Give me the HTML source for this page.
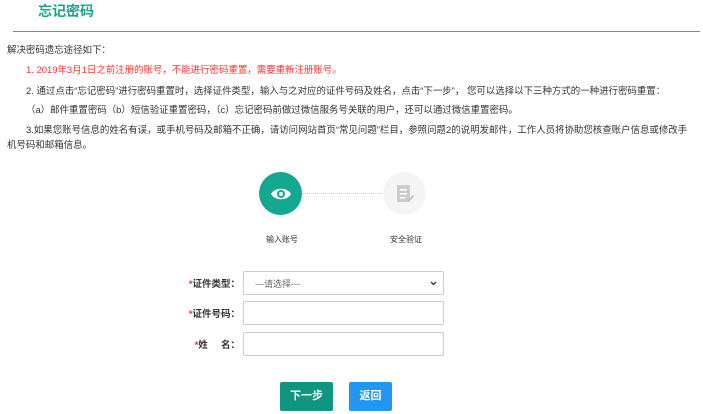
<!DOCTYPE html>
<html><head><meta charset="utf-8"><style>
body{margin:0;width:703px;height:414px;background:#fff;font-family:"Liberation Sans","Noto Sans CJK SC",sans-serif;position:relative;overflow:hidden;color:#333}
.a{position:absolute;white-space:nowrap}
.t{font-size:9.45px;line-height:12px}
.lab{position:absolute;font-size:9.5px;font-weight:bold;color:#333;text-align:right;width:80px;left:160px}
.lab b{color:#e33}
.box{position:absolute;left:243px;width:199px;height:22px;border:1px solid #ccc;border-radius:2px;background:#fff}
</style></head><body>
<div class="a" style="left:38px;top:1px;font-size:14px;font-weight:bold;color:#1aa58a">忘记密码</div>
<div class="a" style="left:13px;top:31px;width:687px;height:1px;background:#888"></div>
<div class="a t" style="left:7px;top:45px">解决密码遗忘途径如下：</div>
<div class="a t" style="left:26px;top:65px;color:#f33">1. 2019年3月1日之前注册的账号，不能进行密码重置，需要重新注册账号。</div>
<div class="a t" style="left:26px;top:86px">2. 通过点击“忘记密码”进行密码重置时，选择证件类型，输入与之对应的证件号码及姓名，点击“下一步”， 您可以选择以下三种方式的一种进行密码重置：</div>
<div class="a t" style="left:26px;top:105px">（a）邮件重置密码（b）短信验证重置密码，（c）忘记密码前做过微信服务号关联的用户，还可以通过微信重置密码。</div>
<div class="a t" style="left:26px;top:125px">3.如果您账号信息的姓名有误，或手机号码及邮箱不正确，请访问网站首页“常见问题”栏目，参照问题2的说明发邮件，工作人员将协助您核查账户信息或修改手</div>
<div class="a t" style="left:7px;top:140px">机号码和邮箱信息。</div>
<div class="a" style="left:302px;top:193px;width:80px;border-top:1px dotted #ccc"></div>
<div class="a" style="left:259px;top:172px;width:43px;height:43px;border-radius:50%;background:#14a88e"></div>
<svg class="a" style="left:270px;top:186px" width="22" height="16" viewBox="0 0 22 16"><path d="M1 8C5 1 17 1 21 8C17 15 5 15 1 8Z" fill="#fff"/><circle cx="11" cy="8" r="4" fill="#14a88e"/><circle cx="11" cy="8" r="2" fill="#fff"/></svg>
<div class="a" style="left:383px;top:172px;width:43px;height:43px;border-radius:50%;background:#f5f5f7"></div>
<svg class="a" style="left:396px;top:184px" width="18" height="20" viewBox="0 0 18 20"><rect x="1" y="1" width="13" height="17" rx="1" fill="#ccc"/><rect x="4" y="5" width="7" height="1.5" fill="#fff"/><rect x="4" y="9" width="7" height="1.5" fill="#fff"/><rect x="4" y="13" width="5" height="1.5" fill="#fff"/><path d="M12 17l5-6 1 1-5 6z" fill="#bbb"/></svg>
<div class="a" style="left:266px;top:234px;font-size:8px">输入账号</div>
<div class="a" style="left:390px;top:234px;font-size:8px">安全验证</div>
<div class="lab" style="top:276px"><b>*</b>证件类型：</div>
<div class="box" style="top:271px"><span class="a" style="left:11px;top:5px;font-size:9px;color:#666">---请选择---</span><svg class="a" style="right:6px;top:9px" width="7" height="5" viewBox="0 0 7 5"><path d="M1 1l2.5 2.5L6 1" stroke="#333" stroke-width="1.3" fill="none"/></svg></div>
<div class="lab" style="top:306px"><b>*</b>证件号码：</div>
<div class="box" style="top:301px"></div>
<div class="lab" style="top:337px"><b>*</b>姓&nbsp;&nbsp;&nbsp;&nbsp;&nbsp;名：</div>
<div class="box" style="top:332px"></div>
<div class="a" style="left:280px;top:382px;width:53px;height:29px;background:#12957f;color:#fff;font-size:11px;font-weight:bold;text-align:center;line-height:29px;border-radius:2px">下一步</div>
<div class="a" style="left:349px;top:382px;width:43px;height:29px;background:#2196f3;color:#fff;font-size:11px;font-weight:bold;text-align:center;line-height:29px;border-radius:2px">返回</div>
</body></html>
